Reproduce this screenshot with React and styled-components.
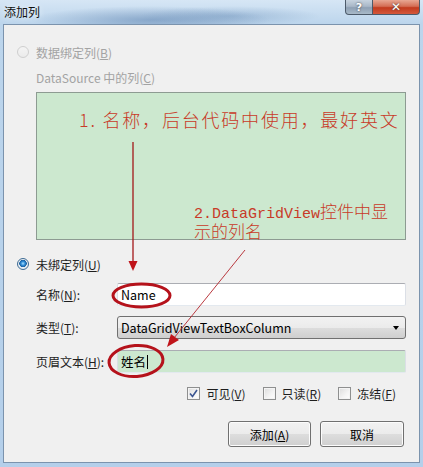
import React from "react";
import styled, { createGlobalStyle } from "styled-components";

const Global = createGlobalStyle`
  html, body { margin: 0; padding: 0; }
  body {
    font-family: "Noto Sans CJK SC", "Noto Sans", sans-serif;
    font-size: 12px;
    color: #1e1e1e;
  }
`;

const Window = styled.div`
  position: relative;
  width: 423px;
  height: 467px;
  display: flex;
  flex-direction: column;
  background:
    radial-gradient(ellipse 120px 14px at 150px 20px, rgba(70,110,160,0.45), rgba(70,110,160,0) 100%),
    radial-gradient(ellipse 90px 10px at 230px 16px, rgba(90,130,175,0.35), rgba(90,130,175,0) 100%),
    linear-gradient(to bottom, #d6e6f5 0px, #bcd5ec 24px, #b4cfea 100%);
  overflow: hidden;
`;

const TitleBar = styled.div`
  height: 24px;
  display: flex;
  align-items: flex-start;
  justify-content: space-between;
  padding-left: 4px;
  padding-right: 3px;
  flex-shrink: 0;
`;

const Title = styled.div`
  font-size: 12px;
  line-height: 14px;
  margin-top: 5px;
  color: #101010;
  text-shadow: 0 0 6px rgba(255,255,255,0.9);
`;

const Controls = styled.div`
  display: flex;
  height: 15px;
`;

const CtrlButton = styled.div`
  width: ${(p) => p.$w}px;
  height: 15px;
  box-sizing: border-box;
  border: 1px solid #4c5a6a;
  border-top: none;
  display: flex;
  align-items: center;
  justify-content: center;
  color: #fff;
  font-family: "DejaVu Sans", sans-serif;
  font-weight: bold;
  font-size: ${(p) => p.$fs}px;
  line-height: 1;
  text-shadow: 0 0 2px #333;
  background: ${(p) =>
    p.$close
      ? "linear-gradient(to bottom, #e8a793 0%, #d46e55 45%, #c23b1e 55%, #d4583c 100%)"
      : "linear-gradient(to bottom, #c7d3df 0%, #a9b8c8 45%, #8ea0b4 55%, #a9bac9 100%)"};
  border-radius: ${(p) => (p.$close ? "0 0 4px 0" : "0 0 0 4px")};
  ${(p) => (p.$close ? "border-left: none;" : "")}
`;

const Client = styled.div`
  flex: 1;
  margin: 0 3px 4px 3px;
  border: 1px solid #7b93ad;
  background: #f0f0f0;
  display: flex;
  flex-direction: column;
  padding: 0 13px 0 13px;
`;

const RadioRow = styled.label`
  display: flex;
  align-items: center;
  height: 20px;
  margin-top: ${(p) => p.$mt}px;
  color: ${(p) => (p.$disabled ? "#a3a3a3" : "#1e1e1e")};
  gap: 7px;
`;

const RadioCircle = styled.span`
  width: 12px;
  height: 12px;
  box-sizing: border-box;
  border-radius: 50%;
  border: 1px solid ${(p) => (p.$disabled ? "#cfcfcf" : "#3d6b93")};
  background: ${(p) =>
    p.$checked
      ? "radial-gradient(circle at 50% 45%, #a9e1ff 0px, #2d8ad6 2px, #1a5f9e 3.5px, #e9eef3 4px, #dfe6ee 100%)"
      : p.$disabled
      ? "linear-gradient(to bottom, #f4f4f4, #ebebeb)"
      : "#fff"};
  flex-shrink: 0;
`;

const Mn = styled.span`
  text-decoration: underline;
  text-underline-offset: 1px;
`;

const SubLabel = styled.div`
  height: 16px;
  line-height: 16px;
  margin-top: 8px;
  padding-left: 19px;
  color: #a3a3a3;
`;

const GreenBox = styled.div`
  margin-top: 6px;
  margin-left: 19px;
  height: 148px;
  box-sizing: border-box;
  background: #cce8cf;
  border: 1px solid #8d9b92;
`;

const FormRow = styled.div`
  display: flex;
  align-items: center;
  margin-top: ${(p) => p.$mt}px;
  padding-left: 19px;
`;

const FieldLabel = styled.div`
  width: 81px;
  flex-shrink: 0;
`;

const TextInput = styled.div`
  flex: 1;
  height: 23px;
  box-sizing: border-box;
  border: 1px solid #dbdfe6;
  border-top-color: #abadb3;
  border-bottom-color: #e3e9ef;
  border-radius: 2px;
  background: ${(p) => p.$bg || "#fff"};
  display: flex;
  align-items: center;
  padding-left: 3px;
  font-size: 12.5px;
  color: #000;
`;

const Caret = styled.span`
  display: inline-block;
  width: 1px;
  height: 14px;
  background: #000;
  margin-left: 1px;
`;

const Select = styled.div`
  flex: 1;
  height: 23px;
  box-sizing: border-box;
  border: 1px solid #707070;
  border-radius: 3px;
  background: linear-gradient(to bottom, #f2f2f2 0%, #ebebeb 50%, #dddddd 51%, #cfcfcf 100%);
  display: flex;
  align-items: center;
  justify-content: space-between;
  padding: 0 6px 0 3px;
  font-size: 12.5px;
  color: #000;
`;

const Arrow = styled.span`
  width: 0;
  height: 0;
  border-left: 3.5px solid transparent;
  border-right: 3.5px solid transparent;
  border-top: 4px solid #000;
`;

const CheckRow = styled.div`
  display: flex;
  justify-content: flex-end;
  align-items: center;
  height: 16px;
  margin-top: 12px;
  margin-right: 10px;
  gap: 17px;
`;

const CheckItem = styled.label`
  display: flex;
  align-items: center;
  gap: 6px;
`;

const Box = styled.span`
  width: 13px;
  height: 13px;
  box-sizing: border-box;
  border: 1px solid #8e8f8f;
  background: linear-gradient(135deg, #dcdcdc 0%, #f4f4f4 60%, #ffffff 100%);
  box-shadow: inset 0 0 0 1px #f4f4f4;
  display: flex;
  align-items: center;
  justify-content: center;
`;

const ButtonRow = styled.div`
  display: flex;
  justify-content: flex-end;
  gap: 9px;
  margin-top: 20px;
  margin-right: 2px;
`;

const Button = styled.div`
  width: ${(p) => p.$w}px;
  height: 26px;
  box-sizing: border-box;
  border: 1px solid #707070;
  border-radius: 3px;
  background: linear-gradient(to bottom, #f2f2f2 0%, #ebebeb 50%, #dddddd 51%, #cfcfcf 100%);
  box-shadow: inset 0 0 0 1px #fcfcfc;
  display: flex;
  align-items: center;
  justify-content: center;
  color: #000;
`;

const Overlay = styled.svg`
  position: absolute;
  left: 0;
  top: 0;
  pointer-events: none;
`;

const Note = styled.div`
  position: absolute;
  left: ${(p) => p.$x}px;
  top: ${(p) => p.$y}px;
  color: #c83a28;
  font-size: 18px;
  line-height: 20px;
  white-space: nowrap;
  font-family: "Noto Sans CJK SC", sans-serif;
  font-weight: 300;
`;

const Note1 = styled(Note)`
  letter-spacing: 1.8px;
`;

const NoteLine = styled.div`
  height: 20px;
  line-height: 20px;
  font-size: 17px;
`;

const Mono = styled.span`
  font-family: "Liberation Mono", monospace;
  font-size: 15px;
`;

function Check() {
  return (
    <svg width="9" height="9" viewBox="0 0 9 9">
      <path d="M1 4.5 L3.5 7.5 L8 1" fill="none" stroke="#3b5591" strokeWidth="1.6" />
    </svg>
  );
}

export default function App() {
  return (
    <>
      <Global />
      <Window>
        <TitleBar>
          <Title>添加列</Title>
          <Controls>
            <CtrlButton $w={28} $fs={11}>?</CtrlButton>
            <CtrlButton $w={47} $fs={12} $close>✕</CtrlButton>
          </Controls>
        </TitleBar>
        <Client>
          <RadioRow $mt={17} $disabled>
            <RadioCircle $disabled />
            <span>
              数据绑定列(<Mn>B</Mn>)
            </span>
          </RadioRow>
          <SubLabel>
            DataSource 中的列(<Mn>C</Mn>)
          </SubLabel>
          <GreenBox />
          <RadioRow $mt={14}>
            <RadioCircle $checked />
            <span>
              未绑定列(<Mn>U</Mn>)
            </span>
          </RadioRow>
          <FormRow $mt={9}>
            <FieldLabel>
              名称(<Mn>N</Mn>):
            </FieldLabel>
            <TextInput>Name</TextInput>
          </FormRow>
          <FormRow $mt={10}>
            <FieldLabel>
              类型(<Mn>T</Mn>):
            </FieldLabel>
            <Select>
              <span>DataGridViewTextBoxColumn</span>
              <Arrow />
            </Select>
          </FormRow>
          <FormRow $mt={11}>
            <FieldLabel>
              页眉文本(<Mn>H</Mn>):
            </FieldLabel>
            <TextInput $bg="#cce8cf">
              姓名
              <Caret />
            </TextInput>
          </FormRow>
          <CheckRow>
            <CheckItem>
              <Box>
                <Check />
              </Box>
              <span>
                可见(<Mn>V</Mn>)
              </span>
            </CheckItem>
            <CheckItem>
              <Box />
              <span>
                只读(<Mn>R</Mn>)
              </span>
            </CheckItem>
            <CheckItem>
              <Box />
              <span>
                冻结(<Mn>F</Mn>)
              </span>
            </CheckItem>
          </CheckRow>
          <ButtonRow>
            <Button $w={83}>
              添加(<Mn>A</Mn>)
            </Button>
            <Button $w={84}>取消</Button>
          </ButtonRow>
        </Client>

        <Note1 $x={79} $y={109}>1. 名称，后台代码中使用，最好英文</Note1>
        <Note $x={194} $y={201}>
          <NoteLine>
            <Mono>2.DataGridView</Mono>控件中显
          </NoteLine>
          <NoteLine>示的列名</NoteLine>
        </Note>

        <Overlay width="423" height="467" viewBox="0 0 423 467">
          <line x1="133" y1="142" x2="133" y2="262" stroke="#a3181a" strokeWidth="1.3" />
          <polygon points="128.5,261 137.5,261 133,271" fill="#c0141a" />
          <line x1="245" y1="250" x2="174" y2="338" stroke="#b2242a" strokeWidth="0.9" />
          <polygon points="167,347 171,334 179,340" fill="#c0141a" />
          <ellipse cx="141.5" cy="295.5" rx="28.5" ry="11.5" fill="none" stroke="#b5121b" strokeWidth="3" />
          <ellipse
            cx="136"
            cy="361"
            rx="27"
            ry="15.5"
            fill="none"
            stroke="#b5121b"
            strokeWidth="3"
            transform="rotate(-4 136 361)"
          />
        </Overlay>
      </Window>
    </>
  );
}
